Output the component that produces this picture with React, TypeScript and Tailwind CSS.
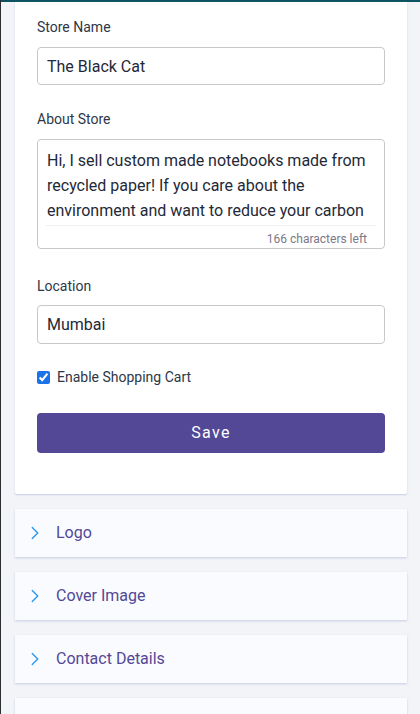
import { ChevronRight } from 'lucide-react'

const sections = ['Logo', 'Cover Image', 'Contact Details']

export default function App() {
  return (
    <div
      className="min-h-screen bg-[#f3f4f8] border-l border-[#2b2f31] overflow-hidden"
      style={{ fontFamily: 'Roboto, "Noto Sans", sans-serif' }}
    >
      <div className="h-[2px] bg-[#0d5361]" />
      <div className="pl-[14px] pr-[13px] flex flex-col gap-[15px]">
        {/* store details form */}
        <div className="bg-white shadow-[0_1px_2px_rgba(180,190,220,0.7)] px-[22px] pt-[15px] pb-[41px] rounded-b-[2px]">
          <label className="block text-sm leading-5 text-[#2d3748]">Store Name</label>
          <input
            className="mt-[10px] w-full h-[38px] border border-[#c8c8cc] rounded-[4px] px-[9px] text-base text-[#1f2937] outline-none"
            defaultValue="The Black Cat"
          />

          <label className="block mt-[24px] text-sm leading-5 text-[#2d3748]">About Store</label>
          <div className="mt-[10px] h-[110px] border border-[#c8c8cc] rounded-[4px] px-[8px] pt-[8px]">
            <p className="px-[1px] text-base leading-[25px] text-[#1f2937] h-[75px]">
              Hi, I sell custom made notebooks made from recycled paper! If you care about the environment and want to reduce your carbon
            </p>
            <div className="border-t border-[#eeeff2] mt-[2px] pt-[5px] pr-[9px] text-right text-xs text-[#7a7889]">
              166 characters left
            </div>
          </div>

          <label className="block mt-[27px] text-sm leading-5 text-[#2d3748]">Location</label>
          <input
            className="mt-[9px] w-full h-[39px] border border-[#c8c8cc] rounded-[4px] px-[9px] text-base text-[#1f2937] outline-none"
            defaultValue="Mumbai"
          />

          <label className="mt-[23px] flex items-center gap-[7px] text-sm text-[#2d3748]">
            <input type="checkbox" defaultChecked className="w-[13px] h-[13px] m-0 accent-[#1a73e8]" />
            Enable Shopping Cart
          </label>

          <button className="mt-[26px] w-full h-[40px] bg-[#524896] rounded-[4px] text-white text-base tracking-[0.08em]">
            Save
          </button>
        </div>

        {sections.map((s) => (
          <div
            key={s}
            className="bg-[#fafbfe] h-[48px] flex items-center pl-[9px] shadow-[0_1px_2px_rgba(180,190,220,0.7)]"
          >
            <ChevronRight className="w-[22px] h-[22px] text-[#2196f3]" strokeWidth={1.4} />
            <span className="ml-[10px] text-base text-[#524896]">{s}</span>
          </div>
        ))}
        <div className="bg-[#fafbfe] h-[48px] shadow-[0_1px_2px_rgba(180,190,220,0.7)]" />
      </div>
    </div>
  )
}
